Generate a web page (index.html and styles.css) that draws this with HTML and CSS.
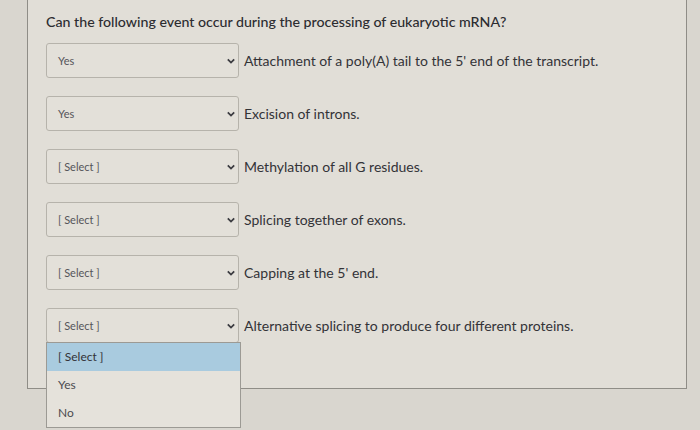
FILE: index.html
```html
<!DOCTYPE html>
<html>
<head>
<meta charset="utf-8">
<link rel="stylesheet" href="styles.css">
</head>
<body>
<div class="page">
  <div class="panel">
    <div class="question">Can the following event occur during the processing of eukaryotic mRNA?</div>
    <div class="rows">
      <div class="row"><div class="select"><span class="val">Yes</span><svg class="chev" viewBox="0 0 10 6"><path d="M1 1 L5 5 L9 1" /></svg></div><span class="label">Attachment of a poly(A) tail to the 5' end of the transcript.</span></div>
      <div class="row"><div class="select"><span class="val">Yes</span><svg class="chev" viewBox="0 0 10 6"><path d="M1 1 L5 5 L9 1" /></svg></div><span class="label">Excision of introns.</span></div>
      <div class="row"><div class="select"><span class="val">[ Select ]</span><svg class="chev" viewBox="0 0 10 6"><path d="M1 1 L5 5 L9 1" /></svg></div><span class="label">Methylation of all G residues.</span></div>
      <div class="row"><div class="select"><span class="val">[ Select ]</span><svg class="chev" viewBox="0 0 10 6"><path d="M1 1 L5 5 L9 1" /></svg></div><span class="label">Splicing together of exons.</span></div>
      <div class="row"><div class="select"><span class="val">[ Select ]</span><svg class="chev" viewBox="0 0 10 6"><path d="M1 1 L5 5 L9 1" /></svg></div><span class="label">Capping at the 5' end.</span></div>
      <div class="row last"><div class="select"><span class="val">[ Select ]</span><svg class="chev" viewBox="0 0 10 6"><path d="M1 1 L5 5 L9 1" /></svg></div><span class="label">Alternative splicing to produce four different proteins.</span>
        <div class="menu">
          <div class="opt active">[ Select ]</div>
          <div class="opt">Yes</div>
          <div class="opt">No</div>
        </div>
      </div>
    </div>
  </div>
</div>
</body>
</html>
```

FILE: styles.css
```css
html, body {
  margin: 0;
  padding: 0;
}
body {
  width: 700px;
  height: 430px;
  overflow: hidden;
  background: #d9d6cf;
  font-family: Lato, "Liberation Sans", sans-serif;
}
.page {
  padding-left: 27px;
}
.panel {
  width: 660px;
  height: 389px;
  box-sizing: border-box;
  border-left: 1px solid #8f8d87;
  border-right: 1px solid #8f8d87;
  border-bottom: 1px solid #8f8d87;
  background: #e1ded7;
  padding: 13px 0 0 18px;
}
.question {
  font-size: 14.2px;
  color: #2c2c30;
  font-weight: 500;
  height: 18px;
  line-height: 18px;
}
.rows {
  margin-top: 12px;
  display: flex;
  flex-direction: column;
  gap: 18px;
}
.row {
  display: flex;
  align-items: center;
  gap: 5px;
  position: relative;
}
.select {
  width: 193px;
  height: 35px;
  box-sizing: border-box;
  border: 1px solid #b6b3ab;
  border-radius: 3px;
  background: #e3e0d9;
  display: flex;
  align-items: center;
  justify-content: space-between;
  padding: 0 3px 0 11px;
}
.val {
  font-size: 11px;
  color: #55555a;
}
.chev {
  width: 8px;
  height: 6px;
  fill: none;
  stroke: #3b3b40;
  stroke-width: 2.2;
}
.label {
  font-size: 14px;
  color: #333337;
}
.menu {
  position: absolute;
  left: 0;
  top: 34px;
  width: 195px;
  box-sizing: border-box;
  border: 1px solid #9c9a94;
  background: #e5e2db;
  z-index: 2;
}
.opt {
  height: 28px;
  line-height: 28px;
  padding-left: 11px;
  font-size: 12px;
  color: #4b4b50;
}
.opt.active {
  background: #a9cbdf;
  color: #333338;
}
```
